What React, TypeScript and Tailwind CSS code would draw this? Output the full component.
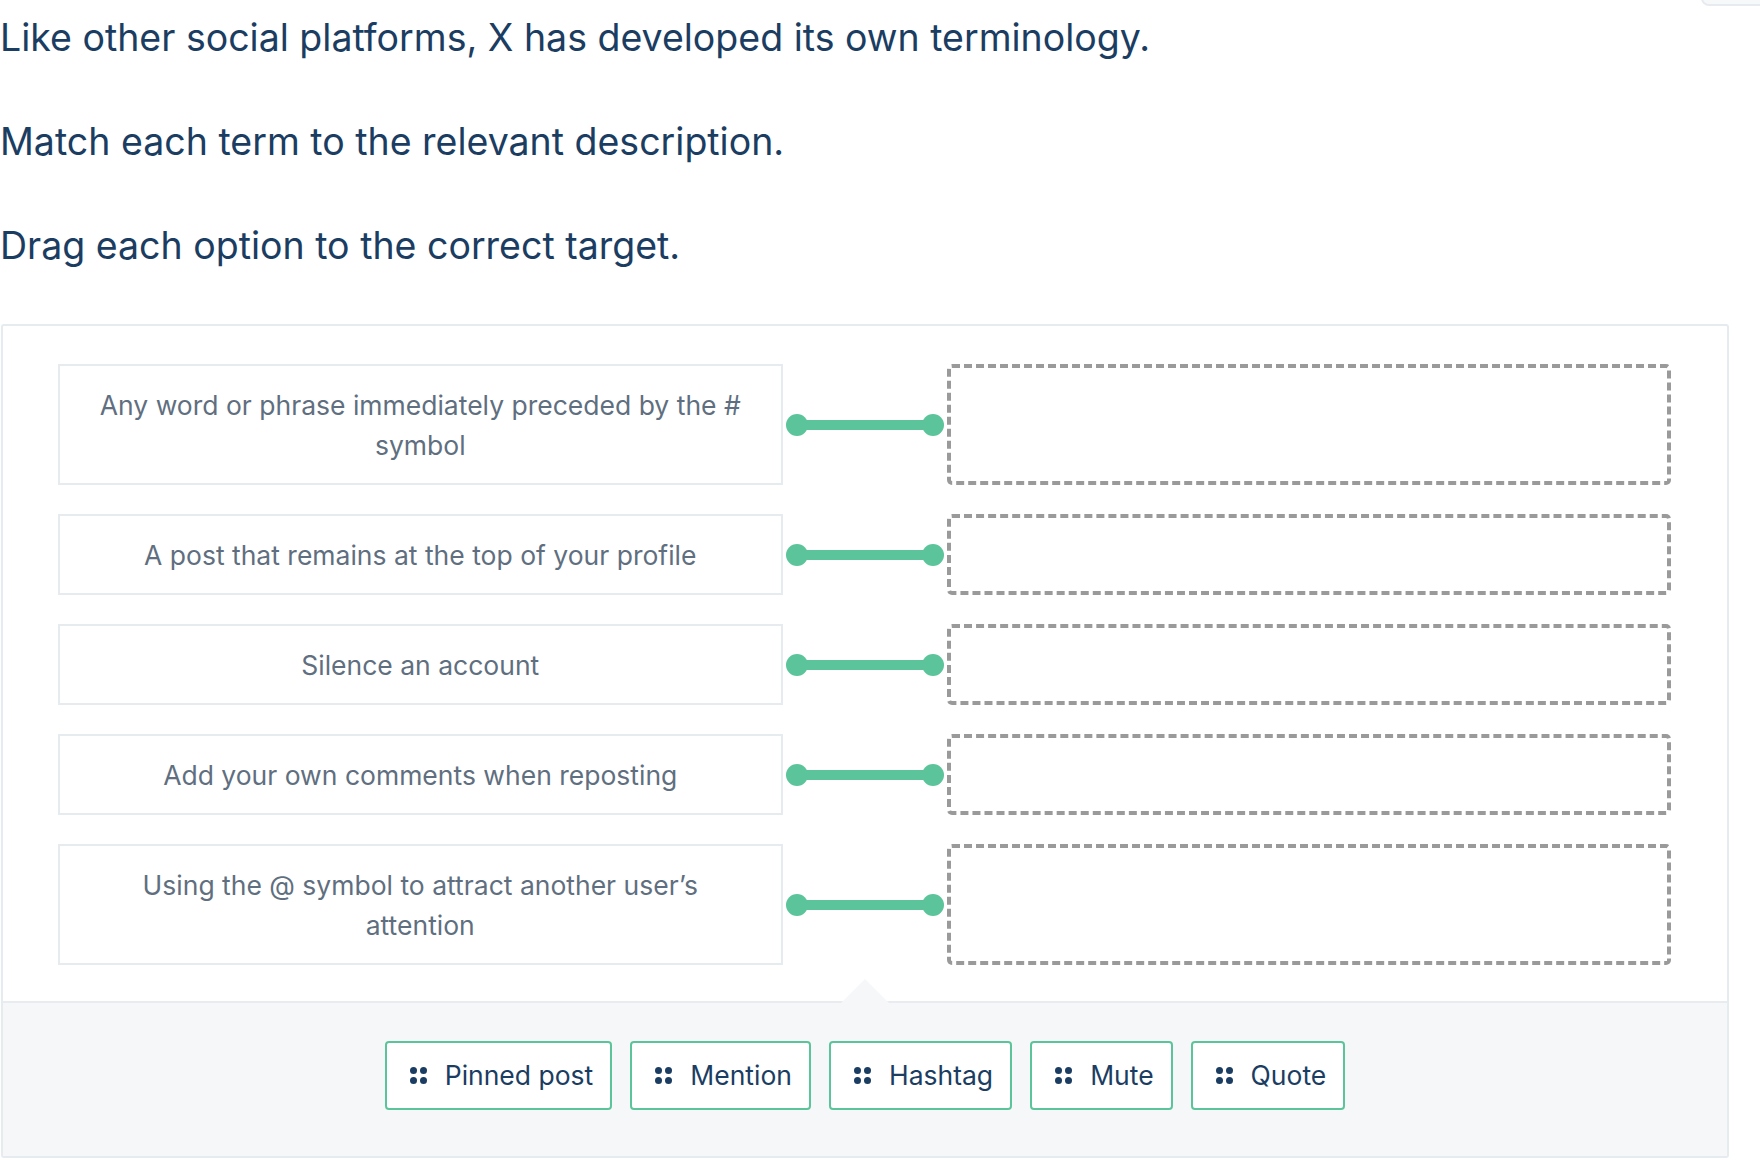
import { useState } from "react";

type Pair = { id: string; text: string };

const descriptions: Pair[] = [
  { id: "d1", text: "Any word or phrase immediately preceded by the # symbol" },
  { id: "d2", text: "A post that remains at the top of your profile" },
  { id: "d3", text: "Silence an account" },
  { id: "d4", text: "Add your own comments when reposting" },
  { id: "d5", text: "Using the @ symbol to attract another user’s attention" },
];

const options = ["Pinned post", "Mention", "Hashtag", "Mute", "Quote"];

function GripDots() {
  return (
    <span className="grid grid-cols-2 gap-[3px] shrink-0">
      <span className="h-[7px] w-[7px] rounded-full bg-[#1b3d62]" />
      <span className="h-[7px] w-[7px] rounded-full bg-[#1b3d62]" />
      <span className="h-[7px] w-[7px] rounded-full bg-[#1b3d62]" />
      <span className="h-[7px] w-[7px] rounded-full bg-[#1b3d62]" />
    </span>
  );
}

function Connector() {
  return (
    <div className="flex items-center px-[3px]">
      <span className="h-[22px] w-[22px] shrink-0 rounded-full bg-[#5cc49a]" />
      <span className="-mx-[2px] h-[10px] flex-1 bg-[#5cc49a]" />
      <span className="h-[22px] w-[22px] shrink-0 rounded-full bg-[#5cc49a]" />
    </div>
  );
}

export default function App() {
  const [dragging, setDragging] = useState<string | null>(null);

  return (
    <div className="relative min-h-[1170px] w-full overflow-hidden bg-white font-['Inter',sans-serif]">
      {/* edge of the toolbar button above the fold */}
      <div className="absolute right-[-8px] top-[-30px] h-[36px] w-[67px] rounded-[8px] border-2 border-[#e7ebef] bg-[#f7f8fa]" />

      <div className="pt-[15px] text-[37.5px] leading-[46px] text-[#1b3d62]">
        <p className="mb-[58px]">Like other social platforms, X has developed its own terminology.</p>
        <p className="mb-[58px]">Match each term to the relevant description.</p>
        <p>Drag each option to the correct target.</p>
      </div>

      <div className="ml-[1px] mt-[55px] w-[1728px] rounded-[3px] border-2 border-[#e6ebef] bg-white">
        <div className="grid grid-cols-[1fr_164px_1fr] gap-y-[29px] pl-[55px] pr-[56px] pt-[38px] pb-[36px]">
          {descriptions.map((d) => (
            <div key={d.id} className="contents">
              <div className="border-2 border-[#e6ebef] bg-white px-[36px] py-[18.5px] text-center text-[26.5px] leading-[40px] text-[#5f6f80]">
                {d.text}
              </div>
              <Connector />
              <div className="rounded-[5px] border-[4px] border-dashed border-[#9a9a9a] bg-white" />
            </div>
          ))}
        </div>

        <div className="relative flex h-[155px] items-start justify-center gap-[18px] border-t-2 border-[#e8ecf0] bg-[#f5f7f9] pt-[38px]">
          <span className="absolute left-1/2 top-[-24px] h-[24px] w-[48px] -translate-x-1/2 bg-[#f5f7f9] [clip-path:polygon(50%_0,100%_100%,0_100%)]" />
          {options.map((o) => (
            <button
              key={o}
              onMouseDown={() => setDragging(o)}
              onMouseUp={() => setDragging(null)}
              className={
                "flex h-[69px] items-center gap-[18px] rounded-[4px] border-2 border-[#5cc49a] bg-white pl-[23px] pr-[17px] text-[26.5px] text-[#1b3d62] " +
                (dragging === o ? "shadow-md" : "")
              }
            >
              <GripDots />
              <span>{o}</span>
            </button>
          ))}
        </div>
      </div>
    </div>
  );
}
